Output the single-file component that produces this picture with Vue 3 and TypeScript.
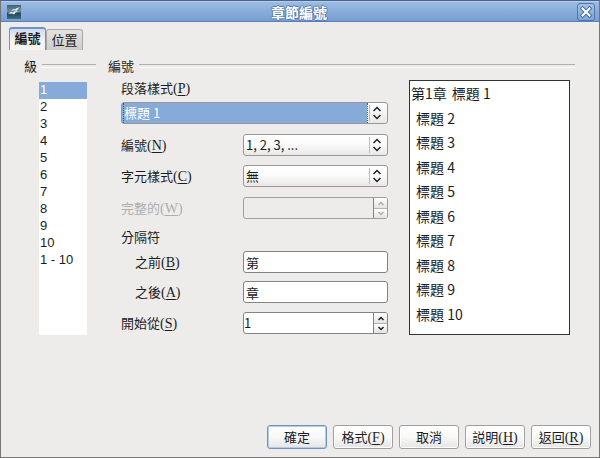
<script setup lang="ts">
import { ref } from 'vue'

interface DialogAction {
  label: string
  key?: string
  primary?: boolean
}

const levels: string[] = ['1', '2', '3', '4', '5', '6', '7', '8', '9', '10', '1 - 10']
const headings: string[] = Array.from({ length: 10 }, (_, i) => `標題 ${i + 1}`)
const actions: DialogAction[] = [
  { label: '確定', primary: true },
  { label: '格式', key: 'F' },
  { label: '取消' },
  { label: '説明', key: 'H' },
  { label: '返回', key: 'R' },
]

const level = ref('1')
const paragraphStyle = ref('標題 1')
const numbering = ref('1, 2, 3, ...')
const characterStyle = ref('無')
const before = ref('第')
const after = ref('章')
const start = ref(1)

function step(delta: number): void {
  start.value = Math.max(0, start.value + delta)
}
</script>

<template>
  <main class="dialog">
    <header class="titlebar">
      <svg class="app-icon" viewBox="0 0 14 14" aria-hidden="true">
        <defs>
          <linearGradient id="app-bg" x1="0" y1="0" x2="0" y2="1">
            <stop offset="0" stop-color="#3c6078" />
            <stop offset="0.45" stop-color="#6f909e" />
            <stop offset="0.6" stop-color="#1f4a63" />
            <stop offset="1" stop-color="#3d6c80" />
          </linearGradient>
        </defs>
        <rect width="14" height="14" fill="url(#app-bg)" />
        <path d="M4 6 Q7 3 8 4.5 Q10 2 13 2.5 Q10.500 3.500 9.500 6 Q8 4.500 4 6Z" fill="#e8f0f2" />
        <path d="M1 9 Q4 6 6 7.500 Q8 5.500 11 6.500 Q8 7 7 9.500 Q5 8 1 9Z" fill="#fff" />
      </svg>
      <h1 class="title">章節編號</h1>
      <button class="close" type="button" aria-label="關閉">
        <svg viewBox="0 0 16 16" aria-hidden="true">
          <path d="M4.500 4.500 L11.500 11.500 M11.500 4.500 L4.500 11.500" stroke="#456fa6" stroke-width="4" stroke-linecap="square" />
          <path d="M4.500 4.500 L11.500 11.500 M11.500 4.500 L4.500 11.500" stroke="#fff" stroke-width="2" stroke-linecap="square" />
        </svg>
      </button>
    </header>

    <nav class="tabs" role="tablist">
      <button class="tab active" type="button" role="tab" aria-selected="true">編號</button>
      <button class="tab" type="button" role="tab" aria-selected="false">位置</button>
    </nav>

    <div class="content">
      <section class="group levels">
        <h2 class="legend"><label for="level">級</label></h2>
        <select id="level" v-model="level" class="level-list" size="11">
          <option v-for="item in levels" :key="item" :value="item">{{ item }}</option>
        </select>
      </section>

      <section class="group">
        <h2 class="legend">編號</h2>
        <div class="columns">
          <form class="form" @submit.prevent>
            <label class="caption" for="paragraph">段落樣式<span class="key">(<u>P</u>)</span></label>
            <div class="combo focused">
              <select id="paragraph" v-model="paragraphStyle">
                <option v-for="item in headings" :key="item">{{ item }}</option>
              </select>
              <svg class="arrows" viewBox="0 0 10 14" aria-hidden="true"><path d="M1.500 5 L5 1.500 L8.500 5 M1.500 9 L5 12.500 L8.500 9" /></svg>
            </div>

            <div class="row spaced">
              <label for="numbering">編號<span class="key">(<u>N</u>)</span></label>
              <div class="combo">
                <select id="numbering" v-model="numbering">
                  <option>1, 2, 3, ...</option>
                </select>
                <svg class="arrows" viewBox="0 0 10 14" aria-hidden="true"><path d="M1.500 5 L5 1.500 L8.500 5 M1.500 9 L5 12.500 L8.500 9" /></svg>
              </div>
            </div>

            <div class="row">
              <label for="character">字元樣式<span class="key">(<u>C</u>)</span></label>
              <div class="combo">
                <select id="character" v-model="characterStyle">
                  <option>無</option>
                </select>
                <svg class="arrows" viewBox="0 0 10 14" aria-hidden="true"><path d="M1.500 5 L5 1.500 L8.500 5 M1.500 9 L5 12.500 L8.500 9" /></svg>
              </div>
            </div>

            <div class="row spaced disabled">
              <label for="complete">完整的<span class="key">(<u>W</u>)</span></label>
              <div class="spin">
                <input id="complete" type="text" disabled />
                <div class="steps">
                  <button type="button" disabled aria-label="增加"><svg viewBox="0 0 8 5" aria-hidden="true"><path d="M1.500 4 L4 1.500 L6.500 4" /></svg></button>
                  <button type="button" disabled aria-label="減少"><svg viewBox="0 0 8 5" aria-hidden="true"><path d="M1.500 1 L4 3.500 L6.500 1" /></svg></button>
                </div>
              </div>
            </div>

            <p class="subhead">分隔符</p>
            <div class="row first">
              <label class="indent" for="before">之前<span class="key">(<u>B</u>)</span></label>
              <input id="before" v-model="before" class="field" type="text" />
            </div>
            <div class="row tight">
              <label class="indent" for="after">之後<span class="key">(<u>A</u>)</span></label>
              <input id="after" v-model="after" class="field" type="text" />
            </div>
            <div class="row">
              <label for="start">開始從<span class="key">(<u>S</u>)</span></label>
              <div class="spin">
                <input id="start" v-model.number="start" type="text" />
                <div class="steps">
                  <button type="button" aria-label="增加" @click="step(1)"><svg viewBox="0 0 8 5" aria-hidden="true"><path d="M1.500 4 L4 1.500 L6.500 4" /></svg></button>
                  <button type="button" aria-label="減少" @click="step(-1)"><svg viewBox="0 0 8 5" aria-hidden="true"><path d="M1.500 1 L4 3.500 L6.500 1" /></svg></button>
                </div>
              </div>
            </div>
          </form>

          <ol class="preview">
            <li v-for="(item, i) in headings" :key="item">
              <span v-if="i === 0" class="prefix">{{ before }}{{ start }}{{ after }}</span>{{ item }}
            </li>
          </ol>
        </div>
      </section>
    </div>

    <footer class="actions">
      <button v-for="a in actions" :key="a.label" type="button" class="action" :class="{ primary: a.primary }">
        {{ a.label }}<span v-if="a.key" class="key">(<u>{{ a.key }}</u>)</span>
      </button>
    </footer>
  </main>
</template>

<style>
body {
  background: #edeceb;
}
</style>

<style scoped>
* {
  box-sizing: border-box;
}

.dialog {
  display: flex;
  flex-direction: column;
  min-height: 100vh;
  border: 1px solid #777674;
  border-top-color: #4a6389;
  background: #edeceb;
  color: #1c1c1c;
  font: 13px/18px "Noto Sans CJK TC", sans-serif;
}

button,
input,
select {
  margin: 0;
  padding: 0;
  border: 0;
  border-radius: 0;
  outline: none;
  color: inherit;
  font: inherit;
}

.key {
  font-family: "Liberation Serif", serif;
  font-size: 14px;
  line-height: 1;
}

u {
  text-underline-offset: 2px;
}

.titlebar {
  display: flex;
  align-items: center;
  height: 21px;
  padding: 0 4px 0 6px;
  border-top: 1px solid #b4cdec;
  border-bottom: 1px solid #5b82b6;
  background: linear-gradient(#9bbbe3, #779fd1);
}

.app-icon {
  width: 14px;
  height: 14px;
}

.title {
  flex: 1;
  margin: 0;
  color: #fff;
  font-size: 14px;
  font-weight: 700;
  line-height: 16px;
  text-align: center;
  text-shadow: 1px 0 #5079b0, -1px 0 #5079b0, 0 1px #5079b0, 0 -1px #5079b0;
}

.close {
  width: 18px;
  height: 18px;
  border: 1px solid #4e76ac;
  border-radius: 3px;
  background: linear-gradient(#a3c1e6, #7ea5d6);
}

.close svg {
  display: block;
  width: 16px;
  height: 16px;
}

.tabs {
  display: flex;
  align-items: flex-end;
  height: 28px;
  padding-left: 8px;
}

.tab {
  width: 37px;
  height: 21px;
  border: 1px solid #a9a7a5;
  border-bottom: 0;
  border-radius: 3px 3px 0 0;
  background: linear-gradient(#e3e2e0, #cfcdcb);
}

.tab.active {
  height: 23px;
  padding-bottom: 3px;
  border-color: #6d92c4;
  border-top-width: 2px;
  background: linear-gradient(#cfdcee, #f4f4f4 60%);
  font-weight: 700;
}

.content {
  display: grid;
  grid-template-columns: 72px 1fr;
  gap: 12px;
  padding: 7px 24px 0 23px;
}

.legend {
  display: flex;
  align-items: center;
  gap: 5px;
  margin: 0 0 5px;
  font-size: 13px;
  font-weight: 400;
  line-height: 18px;
}

.legend::after {
  content: "";
  flex: 1;
  height: 2px;
  border-top: 1px solid #b0aeac;
  border-bottom: 1px solid #f8f8f7;
}

.levels {
  display: flex;
  flex-direction: column;
}

.level-list {
  flex: 1;
  width: 48px;
  margin: 2px 0 0 15px;
  background: #fff;
  font-family: "Liberation Sans", sans-serif;
  overflow: hidden;
}

.level-list option {
  min-height: 17px;
  height: 17px;
  padding: 0 1px;
}

.level-list option:checked {
  background: #86abd9 linear-gradient(#86abd9, #86abd9);
  -webkit-text-fill-color: #fff;
}

.columns {
  display: grid;
  grid-template-columns: 1fr 161px;
  gap: 21px;
  padding: 0 5px 0 13px;
}

.form {
  padding-bottom: 1px;
}

.caption {
  display: block;
  line-height: 16px;
  margin-bottom: 6px;
}

.row {
  display: grid;
  grid-template-columns: 1fr 145px;
  align-items: center;
  margin-top: 9px;
}

.row.spaced {
  margin-top: 10px;
}

.row.first {
  margin-top: 5px;
}

.row.tight {
  margin-top: 8px;
}

.row.disabled {
  color: #b0aeac;
}

.indent {
  padding-left: 14px;
}

.subhead {
  margin: 9px 0 0;
}

.combo {
  position: relative;
  height: 22px;
}

.combo select {
  display: block;
  width: 100%;
  height: 22px;
  padding: 0 22px 0 2px;
  border: 1px solid #9a9694;
  border-radius: 3px;
  background: linear-gradient(#fff, #fbfbfb 45%, #e9e8e7);
  appearance: none;
}

.combo::after {
  content: "";
  position: absolute;
  top: 3px;
  right: 18px;
  width: 1px;
  height: 16px;
  background: #c0bebc;
}

.combo.focused select {
  background: linear-gradient(90deg, #86abd9, #86abd9) left / calc(100% - 20px) 100% no-repeat, linear-gradient(#fff, #e9e8e7);
  color: #fff;
}

.combo.focused::before {
  content: "";
  position: absolute;
  top: 1px;
  bottom: 1px;
  left: 2px;
  right: 20px;
  border: dotted #3d5a80;
  border-width: 0 1px;
  pointer-events: none;
}

.arrows {
  position: absolute;
  top: 4px;
  right: 6px;
  width: 10px;
  height: 14px;
  fill: none;
  stroke: #222;
  stroke-width: 1.5;
  pointer-events: none;
}

.field {
  width: 100%;
  height: 22px;
  padding: 0 2px;
  border: 1px solid #858381;
  border-radius: 3px;
  background: #fff;
}

.spin {
  display: flex;
  height: 22px;
  border: 1px solid #858381;
  border-radius: 3px;
  background: #fff;
  overflow: hidden;
}

.spin input {
  flex: 1;
  min-width: 0;
  background: transparent;
}

.steps {
  display: grid;
  grid-template-rows: 1fr 1fr;
  width: 14px;
  border-left: 1px solid #858381;
}

.steps button {
  display: grid;
  place-items: center;
  background: linear-gradient(#fff, #e4e3e2);
}

.steps button + button {
  border-top: 1px solid #b5b3b1;
}

.steps svg {
  width: 8px;
  height: 5px;
  fill: none;
  stroke: #222;
  stroke-width: 1.5;
}

.disabled .spin {
  border-color: #a19f9d;
  background: #edeceb;
}

.disabled .steps svg {
  stroke: #b0aeac;
}

.preview {
  display: flex;
  flex-direction: column;
  margin: 0;
  padding: 0 0 8px 6px;
  border: 1px solid #333;
  background: #fff;
  font-size: 14px;
  list-style: none;
}

.preview li {
  display: flex;
  flex: 1;
  align-items: center;
}

.prefix {
  margin-left: -5px;
  margin-right: 5px;
}

.actions {
  display: flex;
  justify-content: flex-end;
  gap: 6px;
  margin-top: auto;
  padding: 0 8px 8px;
}

.action {
  width: 60px;
  height: 24px;
  border: 1px solid #a19f9d;
  border-radius: 3px;
  background: linear-gradient(#fff, #f8f8f8 50%, #e6e5e4);
  box-shadow: inset 0 0 0 1px #fff;
}

.action.primary {
  border-color: #6d92c4;
  box-shadow: inset 0 0 0 1px #b5cce9;
}
</style>
